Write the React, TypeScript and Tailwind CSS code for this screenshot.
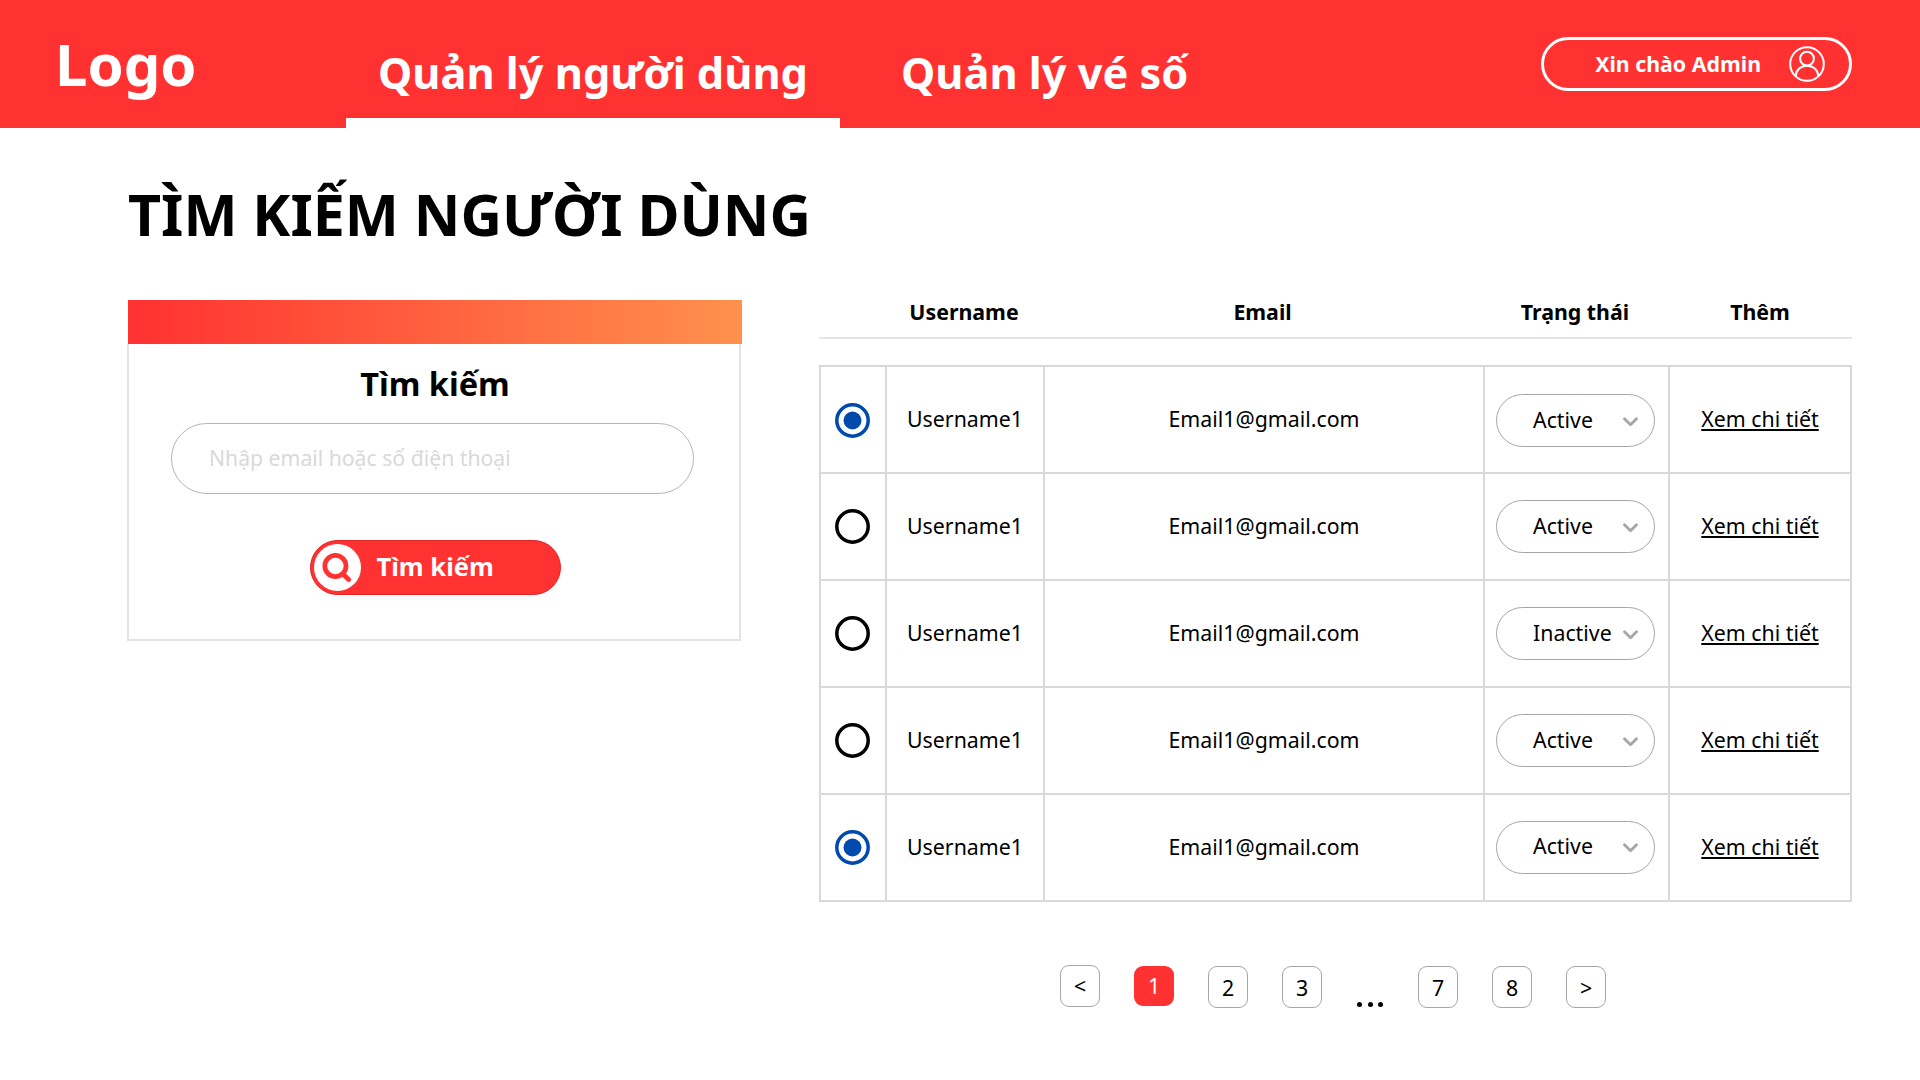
import React from "react";

type Row = { username: string; email: string; status: string; checked: boolean; shift: string };

const rows: Row[] = [
  { username: "Username1", email: "Email1@gmail.com", status: "Active", checked: true, shift: "pt-[2px]" },
  { username: "Username1", email: "Email1@gmail.com", status: "Active", checked: false, shift: "pt-0" },
  { username: "Username1", email: "Email1@gmail.com", status: "Inactive", checked: false, shift: "pt-0" },
  { username: "Username1", email: "Email1@gmail.com", status: "Active", checked: false, shift: "pt-0" },
  { username: "Username1", email: "Email1@gmail.com", status: "Active", checked: true, shift: "pb-px" },
];

const gridCols = "grid grid-cols-[66px_158px_440px_185px_182px]";

function UserIcon() {
  return (
    <svg className="h-9 w-9" viewBox="0 0 36 36" fill="none" stroke="white" strokeWidth="2">
      <circle cx="18" cy="18" r="16.8" />
      <circle cx="18" cy="12.6" r="6.9" />
      <path d="M6.6 30.2C7.2 23.8 11.800 19.800 18 19.800s10.800 4 11.400 10.400" />
    </svg>
  );
}

function Radio({ checked }: { checked: boolean }) {
  return (
    <svg className="mr-[2px] h-[35px] w-[35px]" viewBox="0 0 35 35" fill="none">
      <circle cx="17.500" cy="17.500" r="15.700" stroke={checked ? "#004aad" : "#000"} strokeWidth="3.500" />
      {checked && <circle cx="17.500" cy="17.500" r="9" fill="#004aad" />}
    </svg>
  );
}

function PageButton({ label, active, raised }: { label: string; active?: boolean; raised?: boolean }) {
  if (active) {
    return (
      <button className="mt-px flex h-10 w-10 items-center justify-center rounded-[9px] bg-[#ff3131] leading-none text-white">
        {label}
      </button>
    );
  }
  return (
    <button
      className={
        (raised ? "mt-0" : "mt-px pt-px") +
        " flex h-[42px] w-10 items-center justify-center rounded-[9px] border border-[#a6a6a6] leading-none"
      }
    >
      {label}
    </button>
  );
}

export default function App() {
  return (
    <div className="h-[1080px] w-[1920px] overflow-hidden bg-white font-['Noto_Sans',sans-serif] text-[21.33px] text-black">
      <header className="flex h-32 items-start bg-[#ff3131] text-white">
        <div className="w-[346px] pt-[24px] pl-[55px] text-[58px] leading-[80px] font-bold">Logo</div>
        <nav className="flex h-full text-[43.33px] leading-[60px] font-bold whitespace-nowrap">
          <a className="h-full w-[494px] border-b-[10px] border-white pt-[43px] text-center">Quản lý người dùng</a>
          <a className="pt-[43px] pl-[61px]">Quản lý vé số</a>
        </nav>
        <div className="mt-[37px] mr-[68px] ml-auto flex h-[54px] w-[311px] items-center justify-end gap-7 rounded-full border-[3px] border-white pr-[24px] font-bold">
          <span className="leading-none">Xin chào Admin</span>
          <UserIcon />
        </div>
      </header>

      <main className="pl-32">
        <h1 className="pt-[46px] text-[57.33px] leading-[80px] font-bold">TÌM KIẾM NGƯỜI DÙNG</h1>

        <div className="flex pt-[34px]">
          <section className="mt-[12px] w-[614px]">
            <div className="h-[44px] bg-[linear-gradient(90deg,#ff3131,#ff914d)]" />
            <div className="-ml-px flex h-[297px] w-[614px] flex-col items-center border-2 border-t-0 border-[#e4e4e4]">
              <h2 className="pt-[18px] pl-[2px] text-[32.500px] leading-[44px] font-bold">Tìm kiếm</h2>
              <div className="mt-[17px] mr-[3px] h-[71px] w-[523px] rounded-full border border-[#b5b5b5] pl-[37px] text-[21.200px] leading-[67px] text-[#d9d9d9]">
                Nhập email hoặc số điện thoại
              </div>
              <button className="mt-[46px] ml-[2px] flex h-[55px] w-[251px] items-center rounded-full border border-[#e02424] bg-[#ff3131] pl-[3px] text-[25.500px] font-bold text-white">
                <span className="flex h-[47px] w-[47px] items-center justify-center rounded-full bg-white">
                  <svg className="h-[30px] w-[30px]" viewBox="0 0 30 30" fill="none" stroke="#ff3131" strokeWidth="4.700" strokeLinecap="round">
                    <circle cx="13.400" cy="13" r="10.600" />
                    <path d="M21 21L26.700 26.700" />
                  </svg>
                </span>
                <span className="pb-[2px] pl-4 leading-none">Tìm kiếm</span>
              </button>
            </div>
          </section>

          <section className="ml-[77px] w-[1033px]">
            <div className={gridCols + " h-[51px] border-b-2 border-[#e6e6e6] text-center leading-[48px] font-bold"}>
              <span />
              <span>Username</span>
              <span className="pr-px">Email</span>
              <span className="pr-px">Trạng thái</span>
              <span className="pl-[2px]">Thêm</span>
            </div>
            <div className="mt-[26px] border-t-2 border-l-2 border-[#d9d9d9]">
              {rows.map((r, i) => (
                <div
                  key={i}
                  className={
                    gridCols +
                    " h-[107px] text-center *:flex *:items-center *:justify-center *:border-r-2 *:border-b-2 *:border-[#d9d9d9]"
                  }
                >
                  <div className={r.shift}>
                    <Radio checked={r.checked} />
                  </div>
                  <div className="pb-[2px]">{r.username}</div>
                  <div className="pb-[2px]">{r.email}</div>
                  <div className={r.shift}>
                    <div className="mr-[2px] flex h-[53px] w-[159px] items-center justify-between rounded-full border border-[#a6a6a6] pr-[16px] pl-[36px]">
                      <span className="pb-[2px] leading-none">{r.status}</span>
                      <svg className="mt-[2px] h-[10px] w-[15px]" viewBox="0 0 15 10" fill="none" stroke="#a6a6a6" strokeWidth="2.800" strokeLinecap="round" strokeLinejoin="round">
                        <path d="M1.500 1.700L7.500 7.700L13.500 1.700" />
                      </svg>
                    </div>
                  </div>
                  <div className="pb-[2px]">
                    <a className="underline decoration-2 underline-offset-[2px]">Xem chi tiết</a>
                  </div>
                </div>
              ))}
            </div>

            <div className="flex items-start pt-[63px] pl-[241px]">
              <div className="flex gap-[34px]">
                <PageButton label="<" raised />
                <PageButton label="1" active />
                <PageButton label="2" />
                <PageButton label="3" />
              </div>
              <div className="mt-[37px] flex w-[96px] justify-center gap-[5.700px]">
                <i className="h-[5px] w-[5px] rounded-full bg-black" />
                <i className="h-[5px] w-[5px] rounded-full bg-black" />
                <i className="h-[5px] w-[5px] rounded-full bg-black" />
              </div>
              <div className="flex gap-[34px]">
                <PageButton label="7" />
                <PageButton label="8" />
                <PageButton label=">" />
              </div>
            </div>
          </section>
        </div>
      </main>
    </div>
  );
}
